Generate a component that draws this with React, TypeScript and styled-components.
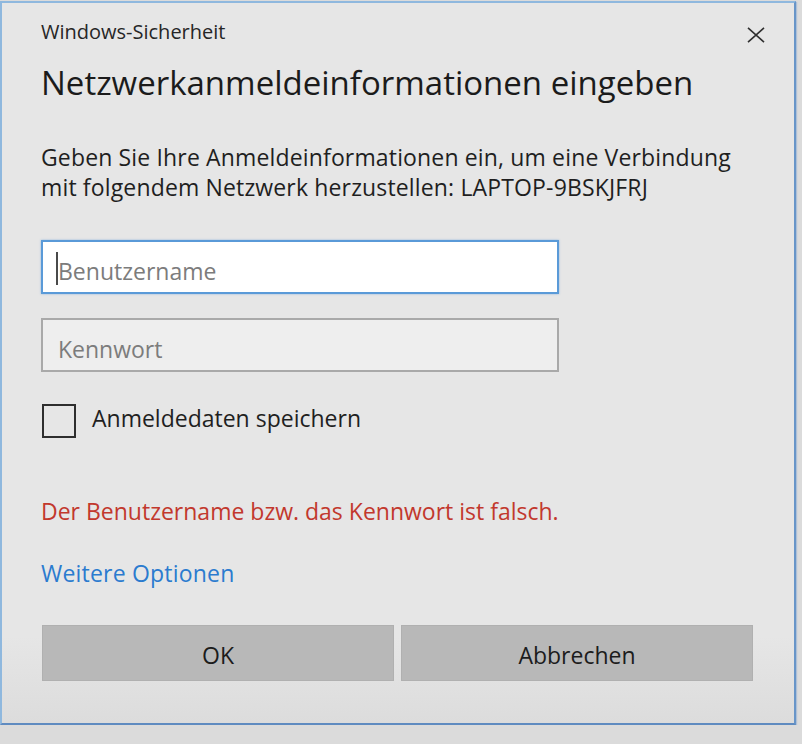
import React from "react";
import styled, { createGlobalStyle } from "styled-components";

const GlobalStyle = createGlobalStyle`
  html, body {
    margin: 0;
    padding: 0;
    background: #dbdbdb;
  }
  body {
    font-family: "Open Sans", "Noto Sans", sans-serif;
    color: #1e1e1e;
  }
  * { box-sizing: border-box; }
`;

const Frame = styled.div`
  width: 796px;
  margin-top: 1px;
  border: 2px solid #8fb8de;
  border-right-color: #6895c8;
  border-bottom-color: #5f8bc0;
  box-shadow: 1px 1px 1px rgba(120, 160, 210, 0.45);
  background: linear-gradient(to bottom, #e6e6e6 0%, #e6e6e6 88%, #dcdcdc 100%);
  padding: 16px 41px 42px 39px;
  display: flex;
  flex-direction: column;
`;

const Header = styled.div`
  display: flex;
  justify-content: space-between;
  align-items: flex-start;
  margin-right: -12px;
`;

const AppName = styled.div`
  font-size: 20px;
  line-height: 26px;
  color: #262626;
`;

const CloseButton = styled.button`
  margin-top: 8px;
  padding: 0;
  border: none;
  background: transparent;
  width: 18px;
  height: 16px;
  display: flex;
  cursor: pointer;
`;

const Title = styled.h1`
  margin: 18px 0 0;
  font-weight: 400;
  font-size: 33px;
  line-height: 40px;
  color: #1b1b1b;
  white-space: nowrap;
`;

const Body = styled.p`
  margin: 39px 0 0;
  font-size: 23px;
  letter-spacing: 0.15px;
  line-height: 30px;
  color: #1f1f1f;
  white-space: nowrap;
`;

const FieldWrap = styled.div<{ $gap: number }>`
  position: relative;
  width: 518px;
  margin-top: ${(p) => p.$gap}px;
`;

const Field = styled.input<{ $focused?: boolean }>`
  display: block;
  width: 100%;
  height: 54px;
  padding: 7px 15px 0;
  font-family: inherit;
  font-size: 23px;
  color: #1f1f1f;
  outline: none;
  border: 2px solid ${(p) => (p.$focused ? "#5a9ad8" : "#a9a9a9")};
  background: ${(p) => (p.$focused ? "#ffffff" : "#eeeeee")};
  box-shadow: ${(p) => (p.$focused ? "0 0 2px rgba(90, 154, 216, 0.6)" : "none")};
  &::placeholder {
    color: #7c7c7c;
    opacity: 1;
  }
`;

/* static text caret shown in the focused field */
const Caret = styled.span`
  position: absolute;
  left: 15px;
  top: 12px;
  width: 2px;
  height: 33px;
  background: #4a4a4a;
  pointer-events: none;
`;

const CheckRow = styled.label`
  display: flex;
  align-items: flex-start;
  gap: 16px;
  margin-top: 32px;
  cursor: pointer;
`;

const Check = styled.input`
  appearance: none;
  margin: 0 0 0 1px;
  width: 34px;
  height: 34px;
  border: 2px solid #2e2e2e;
  background: transparent;
  flex: none;
`;

const CheckLabel = styled.span`
  font-size: 23px;
  line-height: 30px;
  margin-top: -1px;
  color: #1f1f1f;
`;

const ErrorText = styled.div`
  margin-top: 58px;
  font-size: 23px;
  line-height: 30px;
  color: #c2382d;
`;

const MoreLink = styled.a`
  align-self: flex-start;
  margin-top: 32px;
  font-size: 23px;
  letter-spacing: 0.2px;
  line-height: 30px;
  color: #2b7bcf;
  text-decoration: none;
  cursor: pointer;
`;

const ButtonRow = styled.div`
  margin-top: 37px;
  margin-left: 1px;
  display: grid;
  grid-template-columns: 1fr 1fr;
  gap: 7px;
`;

const DialogButton = styled.button`
  height: 56px;
  padding: 3px 0 0;
  border: 1px solid #b0b0b0;
  background: #b8b8b8;
  font-family: inherit;
  font-size: 23px;
  color: #1c1c1c;
  cursor: pointer;
`;

export default function App() {
  return (
    <>
      <GlobalStyle />
      <Frame>
        <Header>
          <AppName>Windows-Sicherheit</AppName>
          <CloseButton aria-label="Schließen">
            <svg width="18" height="16" viewBox="0 0 18 16">
              <path d="M1 0.8 L17 15.2 M17 0.8 L1 15.2" stroke="#2f2f2f" strokeWidth="1.6" fill="none" />
            </svg>
          </CloseButton>
        </Header>
        <Title>Netzwerkanmeldeinformationen eingeben</Title>
        <Body>
          Geben Sie Ihre Anmeldeinformationen ein, um eine Verbindung
          <br />
          mit folgendem Netzwerk herzustellen: LAPTOP-9BSKJFRJ
        </Body>
        <FieldWrap $gap={38}>
          <Field $focused placeholder="Benutzername" />
          <Caret />
        </FieldWrap>
        <FieldWrap $gap={24}>
          <Field type="password" placeholder="Kennwort" />
        </FieldWrap>
        <CheckRow>
          <Check type="checkbox" />
          <CheckLabel>Anmeldedaten speichern</CheckLabel>
        </CheckRow>
        <ErrorText>Der Benutzername bzw. das Kennwort ist falsch.</ErrorText>
        <MoreLink>Weitere Optionen</MoreLink>
        <ButtonRow>
          <DialogButton>OK</DialogButton>
          <DialogButton>Abbrechen</DialogButton>
        </ButtonRow>
      </Frame>
    </>
  );
}
